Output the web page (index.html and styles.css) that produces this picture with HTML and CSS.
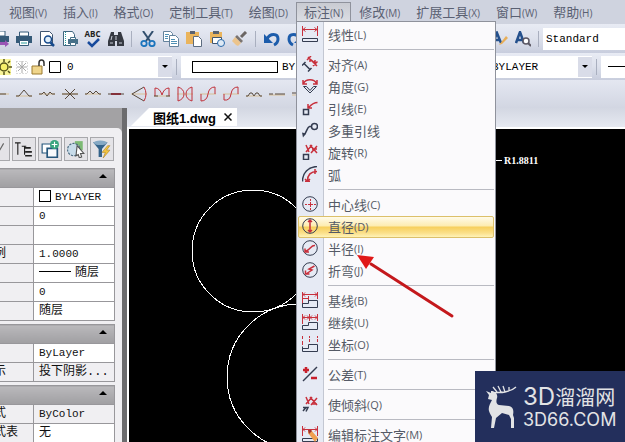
FILE: index.html
```
<!DOCTYPE html>
<html lang="zh-CN">
<head>
    <meta charset="UTF-8">
    <meta name="viewport" content="width=device-width, initial-scale=1.0">
    <title>图纸1.dwg</title>
    <link rel="stylesheet" href="styles.css">
</head>
<body>
<div class="app">
    <nav class="menubar">
        <button class="menu-title">视图<small>(V)</small></button>
        <button class="menu-title">插入<small>(I)</small></button>
        <button class="menu-title">格式<small>(O)</small></button>
        <button class="menu-title">定制工具<small>(T)</small></button>
        <button class="menu-title">绘图<small>(D)</small></button>
        <div class="menu-open">
            <button class="menu-title active">标注<small>(N)</small></button>
            <div class="menu">
                <button class="item">
                    <svg class="mi" viewBox="0 0 16 16"><path class="r" d="M.5 0v10M15.500 0v10M1 3.500h14M3.500 1.500l-2.500 2 2.500 2M12.500 1.500l2.500 2-2.500 2"/><path class="n" d="M.5 12.500h15v3H.5z"/></svg>
                    线性<small>(L)</small></button>
                <hr>
                <button class="item">
                    <svg class="mi" viewBox="0 0 16 16"><path class="r w" d="M6 1l9 9M11 10l4.500-4.500M5 4l4-4M8 3l5 4M8 3v3M13 7v-3"/><path class="n w" d="M2 7.500l6 6M0 9.500l3.500-3.500M6 15.500l3.500-3.500"/></svg>
                    对齐<small>(A)</small></button>
                <button class="item">
                    <svg class="mi" viewBox="0 0 16 16"><path class="r w" d="M1.500 5.500C4 .5 12 .5 14.500 5.500M1 2v4h4M15 2v4h-4"/><path class="n" d="M1.500 8.500h3l3.500 4 3.500-4h3L8 15z"/></svg>
                    角度<small>(G)</small></button>
                <button class="item">
                    <svg class="mi" viewBox="0 0 16 16"><path class="r w" d="M15.500 2.500C11 2.500 9 5 6 8M6 4v4h4"/><path class="n w" d="M1.500 9.500h5v5h-5z"/></svg>
                    引线<small>(E)</small></button>
                <button class="item">
                    <svg class="mi" viewBox="0 0 16 16"><circle class="n w" cx="12.500" cy="4.500" r="3"/><path class="n w" d="M9.500 4.500H7.500C5 5 5 10 2 13"/><path class="nf" d="M0 10.500l4 1L1 15.500z"/></svg>
                    多重引线</button>
                <button class="item">
                    <svg class="mi" viewBox="0 0 16 16"><path class="r w" d="M4 1l3 7M4 8l6-7M8 1l7 8M9 9l6-7M10 5h5"/><path class="n w" d="M1.500 10.500h5v5h-5z"/></svg>
                    旋转<small>(R)</small></button>
                <button class="item">
                    <svg class="mi" viewBox="0 0 16 16"><path class="n w" d="M.5 15.500C.5 7 6 1 15 .5"/><path class="r w" d="M5.500 15C5.500 9 9 5.500 15 5.500M3 13l2.500 2.500L8 13M13 3v5M3 15.500h5"/></svg>
                    弧</button>
                <hr>
                <button class="item">
                    <svg class="mi" viewBox="0 0 16 16"><circle class="n" cx="8" cy="8" r="7.300"/><path class="r" d="M8.500 3v2M8.500 6v5M8.500 12v2M3 8.500h2M6 8.500h5M12 8.500h2"/></svg>
                    中心线<small>(C)</small></button>
                <button class="item selected">
                    <svg class="mi" viewBox="0 0 16 16"><circle class="n" cx="8" cy="8" r="7.300"/><path class="r w" d="M8 1.500v13M6 4l2-2 2 2M6 12l2 2 2-2"/></svg>
                    直径<small>(D)</small></button>
                <button class="item">
                    <svg class="mi" viewBox="0 0 16 16"><circle class="n" cx="8" cy="8" r="7.300"/><path class="r w" d="M13 5.500C9 5 9 9 3.500 11.500M3 8.500v3.500h4"/></svg>
                    半径<small>(I)</small></button>
                <button class="item">
                    <svg class="mi" viewBox="0 0 16 16"><circle class="n" cx="8" cy="8" r="7.300"/><path class="r w" d="M12.500 4L7 7l3 1-6 4M3.500 8.500V12h4"/></svg>
                    折弯<small>(J)</small></button>
                <hr>
                <button class="item">
                    <svg class="mi" viewBox="0 0 16 16"><path class="r" d="M.5 0v15M6.500 4v6M15.500 0v7M1 2.500h14M1 6.500h6M3 .5l-2 2 2 2M13 .5l2 2-2 2"/><path class="n" d="M.5 15.500v-4h6v-3h9v7z"/></svg>
                    基线<small>(B)</small></button>
                <button class="item">
                    <svg class="mi" viewBox="0 0 16 16"><path class="r" d="M.5 0v10M7.500 0v7M15.500 0v7M1 3.500h14M3 1.500l-2 2 2 2M5 1.500l2 2-2 2M10 1.500l-2 2 2 2M13 1.500l2 2-2 2"/><path class="n" d="M.5 15.500v-4h6v-3h9v7z"/></svg>
                    继续<small>(U)</small></button>
                <button class="item">
                    <svg class="mi" viewBox="0 0 16 16"><path class="r" d="M.5 0v3M.5 5v4M7.500 0v2M7.500 3v3M15.500 0v2M15.500 3v3"/><path class="n" d="M.5 10.500v5h15v-7h-9v4h-6"/></svg>
                    坐标<small>(O)</small></button>
                <hr>
                <button class="item">
                    <svg class="mi" viewBox="0 0 16 16"><path class="n w" d="M1 15L15 1"/><path class="rr" d="M1 4h6M4 1v6M9 12h6"/></svg>
                    公差<small>(T)</small></button>
                <hr>
                <button class="item">
                    <svg class="mi" viewBox="0 0 16 16"><path class="r w" d="M4 1l3 7M4 8l6-7M8 1l7 8M9 9l6-7M10 8h5"/><path class="n w" d="M1 11.500h5l-2 4M1 15l3-3.500"/></svg>
                    使倾斜<small>(Q)</small></button>
                <hr>
                <button class="item">
                    <svg class="mi" viewBox="0 0 16 16"><path class="r" d="M.5 0v10M15.500 0v10M1 3.500h14M3 1.500l-2 2 2 2M13 1.500l2 2-2 2"/><path class="n" d="M.5 12.500h15v3H.5z"/><path d="M6 4l3 0 7 8-3 4-7-9z" fill="#f0a050"/><path d="M6 4h3l1 1-3 3z" fill="#a03030"/></svg>
                    编辑标注文字<small>(M)</small></button>
            </div>
        </div>
        <button class="menu-title">修改<small>(M)</small></button>
        <button class="menu-title">扩展工具<small>(X)</small></button>
        <button class="menu-title">窗口<small>(W)</small></button>
        <button class="menu-title">帮助<small>(H)</small></button>
    </nav>

    <div class="toolbar">
        <div class="tools first">
            <button class="tool" aria-label="发布"><svg viewBox="0 0 16 16"><path d="M4 0h8v5H4z" fill="#fff" stroke="#355a78"/><path d="M0 5h16v6H0z" fill="#355a78"/><path d="M5 11h7v-2l4 4-4 3v-2H5z" fill="#9a55b5"/></svg></button>
            <button class="tool" aria-label="打印"><svg viewBox="0 0 16 16"><path d="M3.500 1h9v4h-9z" fill="#fff" stroke="#355a78"/><path d="M0 5h16v7H0z" fill="#355a78"/><path d="M3.500 9.500h9v5h-9z" fill="#fff" stroke="#355a78"/><path d="M5 12h6" stroke="#2c9d9b"/></svg></button>
            <button class="tool" aria-label="打印预览"><svg viewBox="0 0 16 16"><path d="M1.500.5h9l3 3v11h-12z" fill="#fff" stroke="#3f5570"/><circle cx="9" cy="8.500" r="3.500" fill="#e2f0fb" stroke="#174a8c" stroke-width="1.500"/><path d="M11.500 11.500L15 15" stroke="#174a8c" stroke-width="2.500"/></svg></button>
            <button class="tool" aria-label="页面设置"><svg viewBox="0 0 16 16"><path d="M1.500.5h9l2 3v11h-11z" fill="#fff" stroke="#3f6680"/><path d="M3.500 1v13" stroke="#2c9d9b" stroke-dasharray="1 1"/><path d="M6 8h10v5H6z" fill="#467088"/><path d="M8.500 6.500h5v2h-5zM8.500 11.500h5v3h-5z" fill="#fff" stroke="#467088"/></svg></button>
            <button class="tool spell" aria-label="拼写"><b>ABC</b><svg viewBox="0 0 16 10"><path d="M3 4l4 4 7-7" fill="none" stroke="#174a9c" stroke-width="2.500"/></svg></button>
            <button class="tool" aria-label="查找"><svg viewBox="0 0 16 16"><path d="M3 1h3v3h4V1h3l3 9v5H9v-5H7v5H0v-5z" fill="#363a42"/><path d="M2 12h3M11 12h3M8 5v4M4 5l-1 4" stroke="#c8ccd6"/></svg></button>
            <i class="grip"></i>
            <button class="tool" aria-label="剪切"><svg viewBox="0 0 16 16"><path d="M3 0l7 10M13 0L6 10" stroke="#33506e" stroke-width="2"/><circle cx="4" cy="12.500" r="2.700" fill="none" stroke="#1c75bd" stroke-width="1.800"/><circle cx="12" cy="12.500" r="2.700" fill="none" stroke="#1c75bd" stroke-width="1.800"/></svg></button>
            <button class="tool" aria-label="复制"><svg viewBox="0 0 16 16"><path d="M.5.5h7l2 2v8h-9z" fill="#fff" stroke="#64829c"/><path d="M6.500 4.500h6l3 3v8h-9z" fill="#fff" stroke="#64829c"/><path d="M2 3.500h4M2 5.500h3M2 7.500h3M8 8.500h4M8 10.500h6M8 12.500h6" stroke="#4f90b5"/></svg></button>
            <button class="tool" aria-label="粘贴"><svg viewBox="0 0 16 16"><path d="M0 1h13v12H0z" fill="#eab45c"/><path d="M4 0h5v3H4z" fill="#5a6270"/><path d="M7.500 5.500h5l3 3v7h-8z" fill="#fff" stroke="#5c6c80"/></svg></button>
            <button class="tool" aria-label="粘贴为块"><svg viewBox="0 0 16 16"><path d="M1 1h12v11H1z" fill="#eab45c"/><path d="M4 0h6v3H4z" fill="#5a6270"/><path d="M3.500 6.500h9v6h-9z" fill="#fff" stroke="#3f5570"/><circle cx="12" cy="12" r="3.500" fill="#dfeaf5" stroke="#2868a8"/></svg></button>
            <button class="tool" aria-label="特性匹配"><svg viewBox="0 0 16 16"><path d="M14 1L9 6" stroke="#6b6664" stroke-width="3"/><path d="M5 4l6 6-2 2-6-6z" fill="#7a7472"/><path d="M3 6l6 6-3 3-2-1-4-4z" fill="#ecc48c"/></svg></button>
            <i class="grip"></i>
            <button class="tool" aria-label="放弃"><svg viewBox="0 0 16 16"><path d="M3 8C6 2 14 2 14 8c0 3-2 5-4 6" fill="none" stroke="#1c5cab" stroke-width="3"/><path d="M0 3v9h9z" fill="#1c5cab"/></svg></button>
            <button class="tool" aria-label="重做"><svg viewBox="0 0 16 16"><path d="M13 8C10 2 2 2 2 8c0 3 2 5 4 6" fill="none" stroke="#1c5cab" stroke-width="3"/><path d="M16 3v9H7z" fill="#1c5cab"/></svg></button>
        </div>
        <div class="tools">
            <button class="tool" aria-label="文字样式"><svg viewBox="0 0 16 16"><path d="M1 12L5 2l4 10M3 9h5" fill="none" stroke="#24508c" stroke-width="2.500"/><path d="M14 5l2 2-6 6-3 1z" fill="#e8ae58"/></svg></button>
            <button class="tool" aria-label="查找文字"><svg viewBox="0 0 16 16"><path d="M1 12L5 1l4 11M3 9h5" fill="none" stroke="#24508c" stroke-width="2.500"/><circle cx="11" cy="10" r="3" fill="#fff" stroke="#5c5864" stroke-width="1.500"/><path d="M13 12l3 3" stroke="#5c5864" stroke-width="2"/></svg></button>
            <i class="grip"></i>
            <div class="combo style-combo">
                <select aria-label="文字样式列表"><option>Standard</option></select>
            </div>
        </div>
    </div>

    <div class="toolbar">
        <div class="combo layer-combo">
            <svg class="layer-icons" viewBox="0 0 62 16">
                <path d="M0 0h11v16H0z" fill="#f8f49a"/><circle cx="4" cy="8" r="4" fill="#f6f06a" stroke="#55541c" stroke-width="1.500"/><path d="M4 0v3M4 13v3M8 4l2-2M8 12l2 2M9 8h3" stroke="#55541c" stroke-width="1.500"/>
                <path d="M17 8h10M22 2v12M18 4l8 8M26 4l-8 8" stroke="#aaa"/><path d="M16.500 2.500h11v12h-11z" fill="none" stroke="#bbb" stroke-dasharray="1 2"/>
                <path d="M32 7h10v8H32z" fill="#efd58c" stroke="#9b7b30"/><path d="M39 7V4c0-4 5-4 5 0v3" fill="none" stroke="#333" stroke-width="1.500"/>
                <path d="M49.500 2.500h11v11h-11z" fill="#fff" stroke="#000"/>
            </svg>
            <select aria-label="图层"><option>0</option></select>
            <span class="arrow"></span>
        </div>
        <i class="grip"></i>
        <div class="combo color-combo">
            <span class="swatch"></span>
            <select aria-label="颜色"><option>BYLAYER</option></select>
            <span class="arrow"></span>
        </div>
        <div class="combo type-combo">
            <select aria-label="线型"><option>BYLAYER</option></select>
            <span class="arrow"></span>
        </div>
        <i class="grip"></i>
        <div class="combo weight-combo"><span class="line"></span></div>
    </div>

    <div class="toolbar snaps">
        <div class="tools first">
            <button class="tool" aria-label="端点"><svg viewBox="0 0 16 16"><path class="tan" d="M0 8h16"/><path class="br" d="M0 8h13"/></svg></button>
            <button class="tool" aria-label="中点"><svg viewBox="0 0 16 16"><path class="tan" d="M0 10h16"/><path class="br" d="M0 10h3l5-6 5 6h3"/></svg></button>
            <button class="tool" aria-label="波浪线"><svg viewBox="0 0 16 16"><path class="tan" d="M0 8h16"/><path class="br" d="M0 8h3l2-2 3 4 3-4 2 2h3"/></svg></button>
            <button class="tool" aria-label="交点"><svg viewBox="0 0 16 16"><path class="tan" d="M0 8h16"/><path class="br" d="M0 8h16M3 3l10 10M13 3L3 13"/></svg></button>
            <button class="tool" aria-label="曲线"><svg viewBox="0 0 16 16"><path class="tan" d="M0 8h16"/><path class="br" d="M0 8h2l3-3 3 3 3-3 3 3h2"/></svg></button>
            <button class="tool" aria-label="粗线"><svg viewBox="0 0 16 16"><path class="br" d="M0 8h16"/><path d="M3 8h10" stroke="#84313a" stroke-width="2"/></svg></button>
            <button class="tool" aria-label="扇形"><svg viewBox="0 0 16 16"><path class="tan" d="M0 8h16"/><path class="br" d="M13 1L1 8l12 7"/><path class="red" d="M13 1q4 7 0 14"/></svg></button>
            <button class="tool" aria-label="折线"><svg viewBox="0 0 16 16"><path class="tan" d="M0 10h16"/><path class="red" d="M1 10V2q5 0 7 7 2-7 7-7v8"/><path class="br" d="M0 10h4M12 10h4"/></svg></button>
            <button class="tool" aria-label="镜像弧"><svg viewBox="0 0 16 16"><path class="tan" d="M0 8h16"/><path class="red" d="M1 1v14q6-2 6-7T1 1M15 1v14q-6-2-6-7t6-7"/></svg></button>
            <button class="tool" aria-label="样条"><svg viewBox="0 0 16 16"><path class="tan" d="M0 8h16"/><path class="red" d="M1 15V8M1 15q6 0 7-7t7-7v7"/></svg></button>
            <button class="tool" aria-label="曲线二"><svg viewBox="0 0 16 16"><path class="tan" d="M0 8h16"/><path class="red" d="M1 14q6 1 7-6t7-7v7M1 14V8"/></svg></button>
            <button class="tool" aria-label="双峰"><svg viewBox="0 0 16 16"><path class="tan" d="M0 10h16"/><path class="br" d="M0 10h2l2-3 2 0 2 3 2-3h2l2 3h2"/></svg></button>
            <button class="tool" aria-label="直线"><svg viewBox="0 0 16 16"><path class="tan" d="M0 9h16"/><path class="br" d="M0 8h4M6 8h10"/></svg></button>
            <button class="tool" aria-label="斜线"><svg viewBox="0 0 16 16"><path class="tan" d="M0 9h16"/><path class="br" d="M0 7h4l8 2h4"/></svg></button>
        </div>
    </div>

    <div class="work">
        <aside class="panel">
            <div class="panel-title"></div>
            <div class="panel-body">
                <div class="panel-tools">
                    <button class="ptool" aria-label="选择类型"><svg viewBox="0 0 16 16"><path d="M6 6l3 4 4-7" fill="none" stroke="#666"/></svg></button>
                    <button class="ptool" aria-label="树形"><svg viewBox="0 0 16 16"><path d="M0 2.500h5M2.500 2v11M6 5.500h4M8.500 5v8" fill="none" stroke="#222"/><path d="M8 7h6M9 10.500h6M9 14h6" stroke="#222" stroke-width="1.500"/></svg></button>
                    <button class="ptool" aria-label="添加选择"><svg viewBox="0 0 16 16"><path d="M1 3.500h8v8H1z" fill="#fff" stroke="#25567c"/><path d="M5.500 7.500h9v8h-9z" fill="#f7f9fc" stroke="#25567c" stroke-width="1.500"/><circle cx="12" cy="4" r="4" fill="#3aa57f"/><path d="M9.500 4h5M12 1.500v5" stroke="#fff"/></svg></button>
                    <button class="ptool" aria-label="选择对象"><svg viewBox="0 0 16 16"><path d="M7 1h7v8H7z" fill="#7dba74"/><circle cx="6" cy="8.500" r="5.500" fill="#c8dcea" stroke="#4a6a80" stroke-dasharray="2 1"/><path d="M9 5l6 7-3 0 1 3-2 1-1-3-2 1z" fill="#fff" stroke="#555"/></svg></button>
                    <button class="ptool" aria-label="快速选择"><svg viewBox="0 0 16 16"><path d="M0 2h13l-5 6v7H5V8z" fill="#34638a"/><ellipse cx="6.500" cy="2.500" rx="6" ry="2" fill="#86a9c4"/><path d="M13 5L8 11h3l-2 5 6-7h-3l3-4z" fill="#f3c53e" stroke="#a87c20" stroke-width=".5"/></svg></button>
                </div>
                <table class="props">
                    <tr><th colspan="2"><i class="up"></i></th></tr>
                    <tr><td>颜色</td><td><span class="box"></span>BYLAYER</td></tr>
                    <tr><td>图层</td><td>0</td></tr>
                    <tr><td>线型</td><td></td></tr>
                    <tr><td>线型比例</td><td>1.0000</td></tr>
                    <tr><td>线宽</td><td class="cn"><span class="dash"></span>随层</td></tr>
                    <tr><td>厚度</td><td>0</td></tr>
                    <tr><td>透明</td><td class="cn">随层</td></tr>
                </table>
                <table class="props">
                    <tr><th colspan="2"><i class="up"></i></th></tr>
                    <tr><td>材质</td><td>ByLayer</td></tr>
                    <tr><td>阴影显示</td><td class="cn dim">投下阴影...</td></tr>
                </table>
                <table class="props">
                    <tr><th colspan="2"><i class="up"></i></th></tr>
                    <tr><td>打印样式</td><td class="dim">ByColor</td></tr>
                    <tr><td>打印样式表</td><td class="cn">无</td></tr>
                </table>
            </div>
        </aside>
        <main class="drawing">
            <div class="tabs">
                <div class="tab">图纸1.dwg
                    <button class="close" aria-label="关闭"><svg viewBox="0 0 8 8"><path d="M.5.5l7 7M7.500.5l-7 7" stroke="#111" stroke-width="1.500"/></svg></button>
                </div>
            </div>
            <div class="canvas">
                <svg width="496" height="313">
                    <g fill="none" stroke="#fff" shape-rendering="crispEdges">
                        <circle cx="124" cy="122" r="61"/>
                        <circle cx="171" cy="248" r="73"/>
                        <path d="M360 31.500h13"/>
                    </g>
                    <text x="375" y="35">R1.8811</text>
                </svg>
            </div>
        </main>
    </div>

    <svg class="pointer" viewBox="0 0 100 66"><path d="M14 10L95 62" stroke="#c4181c" stroke-width="3" stroke-linecap="round"/><path d="M0 1l17 2-8 12z" fill="#e01818"/></svg>

    <div class="mark">
        <svg class="deer" viewBox="0 0 32 44">
            <path d="M6 8L1 6l3 4-1 4 4 1c-2 4-4 7-3 11 1 3 2 4 3 6l-1 11h3l2-10 6-5 7 2 2 4 0 9h3l0-10-1-3c1-5 0-8-4-9l-10-1c-3-1-3-4-2-7 1-3-1-7-6-7z" fill="#e2e3e5"/>
            <path d="M8 8c3-1 8 0 12-1s8-2 11-5M12 7L8 2M16 7l-3-6M20 7l-2-6M24 6V2" fill="none" stroke="#e2e3e5" stroke-width="1.300"/>
        </svg>
        <div class="mark-text">
            <div class="mark-name"><span>3D</span>溜溜网</div>
            <div class="mark-url">3D66.COM</div>
        </div>
    </div>
</div>
</body>
</html>
```
FILE: styles.css
```
* {
    box-sizing: border-box;
}

body {
    margin: 0;
    font-family: "Open Sans", "Noto Sans CJK SC", sans-serif;
    font-size: 13px;
    background: #cfd3df;
}

button {
    font: inherit;
    color: inherit;
    border: none;
    background: none;
    padding: 0;
}

select {
    appearance: none;
    border: none;
    background: none;
    padding: 0;
    flex: 1;
    min-width: 0;
    color: #000;
    font-family: "Liberation Mono", "Noto Sans CJK SC", monospace;
    font-size: 11px;
}

svg {
    display: block;
}

.app {
    position: relative;
    height: 100vh;
    overflow: hidden;
    display: flex;
    flex-direction: column;
}

/* menu bar */
.menubar {
    display: flex;
    flex: none;
    height: 24px;
    padding: 2px 0 0 1px;
    color: #5a6072;
}

.menu-title {
    height: 20px;
    padding: 0 8px;
    line-height: 18px;
    white-space: nowrap;
}

small {
    font-size: 11px;
}

.menu-title small {
    font-size: 10px;
}

.menu-open {
    position: relative;
}

.menu-title.active {
    padding: 0 7px;
    border: 1px solid #8f929c;
    border-bottom: none;
    background: linear-gradient(#c9cbd2, #dcdee4);
}

.menu {
    position: absolute;
    z-index: 5;
    top: 19px;
    left: 0;
    width: 200px;
    padding: 2px 1px;
    border: 1px solid #8f929c;
    background: linear-gradient(to right, #e6eaf4 26px, #c3c7d2 26px, #c3c7d2 27px, #fbfafc 27px);
    color: #555a66;
}

.item {
    display: flex;
    align-items: center;
    width: 100%;
    height: 22px;
    padding: 0 3px 2px;
    border: 1px solid transparent;
    border-radius: 2px;
    text-align: left;
    white-space: nowrap;
}

.item.selected {
    border-color: #dcc06a;
    background: linear-gradient(#fffbea, #fdecb0 45%, #f7cf5c 50%, #fbe08a 80%, #fff3b8);
}

.menu hr {
    height: 1px;
    margin: 3px 0 4px 30px;
    border: none;
    background: #b9bac2;
}

.mi {
    flex: none;
    width: 16px;
    height: 16px;
    margin-right: 10px;
    fill: none;
}

.r {
    stroke: #c8303c;
}

.rr {
    stroke: #c8202c;
    stroke-width: 2.5;
}

.n {
    stroke: #343c50;
}

.w {
    stroke-width: 1.5;
}

.nf {
    fill: #343c50;
}

/* toolbars */
.toolbar {
    display: flex;
    flex: none;
    justify-content: space-between;
    align-items: center;
    height: 29px;
    background: linear-gradient(#e8ebf4, #dde1ec 50%, #c8cddd);
}

.toolbar + .toolbar {
    height: 27px;
}

.tools {
    display: flex;
    align-items: center;
}

.first {
    margin-left: -11px;
}

.tool {
    display: flex;
    flex: none;
    flex-direction: column;
    align-items: center;
    width: 23px;
}

.tool svg {
    width: 16px;
    height: 16px;
}

.spell {
    font-size: 8px;
    line-height: 8px;
    color: #222;
}

.spell svg {
    height: 10px;
}

.grip {
    flex: none;
    width: 1px;
    height: 16px;
    margin: 0 4px;
    background: #a9afbf;
}

.combo {
    display: flex;
    flex: none;
    align-items: center;
    height: 22px;
    background: #fff;
}

.arrow {
    display: flex;
    flex: none;
    align-items: center;
    justify-content: center;
    width: 14px;
    height: 20px;
    background: #d9dce8;
}

.arrow::after,
.up::after {
    content: "";
    border: 3px solid transparent;
    border-top-color: #000;
    border-bottom: none;
}

.style-combo {
    width: 82px;
    padding-left: 3px;
}

.layer-combo {
    width: 172px;
}

.layer-icons {
    width: 62px;
    height: 16px;
    margin-right: 5px;
}

.color-combo {
    flex: 1;
    padding-left: 11px;
}

.swatch {
    width: 86px;
    height: 12px;
    margin-right: 4px;
    border: 1px solid #000;
}

.type-combo {
    width: 100px;
}

.weight-combo {
    width: 24px;
    padding-left: 7px;
}

.line {
    flex: 1;
    height: 1px;
    background: #000;
}

.toolbar.snaps {
    height: 28px;
    background: linear-gradient(#e4e7f1, #d2d6e2);
}

.snaps path {
    fill: none;
}

.tan {
    stroke: #d8bf96;
}

.br {
    stroke: #57493c;
}

.red {
    stroke: #c0303a;
}

/* properties panel */
.work {
    display: flex;
    flex: 1;
    min-height: 0;
}

.panel {
    flex: none;
    width: 127px;
    border-right: 5px solid #6c6c6e;
    background: #a3a2a4;
    overflow: hidden;
}

.panel-title {
    height: 20px;
}

.panel-body {
    height: 100%;
    padding-top: 9px;
    border-top-right-radius: 5px;
    background: #f0eff2;
}

.panel-tools {
    display: flex;
    gap: 2px;
    margin: 0 0 7px -14px;
}

.ptool {
    display: flex;
    flex: none;
    align-items: center;
    justify-content: center;
    width: 24px;
    height: 24px;
    border: 1px solid #a8a8ac;
    background: #e4e3e7;
}

.ptool svg {
    width: 18px;
    height: 18px;
}

.props {
    width: 163px;
    margin: 0 0 3px -48px;
    border-collapse: collapse;
    table-layout: fixed;
    font-family: "Liberation Mono", "Noto Sans CJK SC", monospace;
    font-size: 11px;
    line-height: 18px;
    white-space: nowrap;
}

.props th,
.props td {
    height: 19px;
    padding: 0 0 0 5px;
    border: 1px solid #98979b;
}

.props th {
    padding-right: 7px;
    background: linear-gradient(#bab9bc, #a09fa2);
    text-align: right;
}

.props td {
    font-size: 12px;
    color: #111;
}

.props td + td {
    width: 82px;
    background: #fff;
    font-size: 11px;
}

.props td + td.cn {
    font-size: 12px;
}

.props td + td.dim {
    background: #f0eff2;
}

.up::after {
    display: inline-block;
    border-width: 4px;
    border-color: transparent;
    border-top: none;
    border-bottom: 4px solid #000;
    vertical-align: 3px;
}

.box,
.dash {
    display: inline-block;
    width: 12px;
    height: 12px;
    margin-right: 4px;
    border: 1px solid #000;
    vertical-align: -2px;
}

.dash {
    width: 32px;
    height: 1px;
    border-width: 1px 0 0;
    vertical-align: 4px;
}

/* drawing area */
.drawing {
    display: flex;
    flex: 1;
    flex-direction: column;
    min-width: 0;
}

.tabs {
    height: 19px;
    padding-left: 4px;
    background: linear-gradient(#d3d7e2, #e6e9f1);
}

.tab {
    display: flex;
    align-items: center;
    width: 106px;
    height: 18px;
    padding-left: 22px;
    clip-path: polygon(18px 0, 100% 0, 100% 100%, 0 100%);
    background: #fff;
    font-family: "Liberation Sans", "Noto Sans CJK SC", sans-serif;
    font-size: 13px;
    font-weight: bold;
    white-space: nowrap;
}

.close {
    margin-left: 8px;
}

.close svg {
    width: 8px;
    height: 8px;
}

.canvas {
    flex: 1;
    min-height: 0;
    border: solid #fff;
    border-width: 2px 0 0 2px;
    background: #000;
    overflow: hidden;
}

.canvas text {
    fill: #fff;
    font-family: "Liberation Serif", serif;
    font-size: 10px;
    font-weight: bold;
}

/* annotation arrow over the menu */
.pointer {
    position: absolute;
    z-index: 6;
    left: 357px;
    top: 254px;
    width: 100px;
    height: 66px;
}

/* watermark */
.mark {
    position: absolute;
    z-index: 7;
    right: 0;
    bottom: 0;
    display: flex;
    align-items: center;
    gap: 6px;
    width: 150px;
    height: 71px;
    padding-left: 10px;
    background: #232f5c;
    color: #e2e3e5;
}

.deer {
    flex: none;
    width: 32px;
    height: 44px;
}

.mark-text {
    white-space: nowrap;
}

.mark-name {
    font-family: "Noto Sans CJK SC", sans-serif;
    font-size: 20px;
    line-height: 26px;
}

.mark-name span {
    font-family: Inter, sans-serif;
    font-size: 24px;
}

.mark-url {
    font-family: Inter, sans-serif;
    font-size: 18px;
    line-height: 20px;
}
```
